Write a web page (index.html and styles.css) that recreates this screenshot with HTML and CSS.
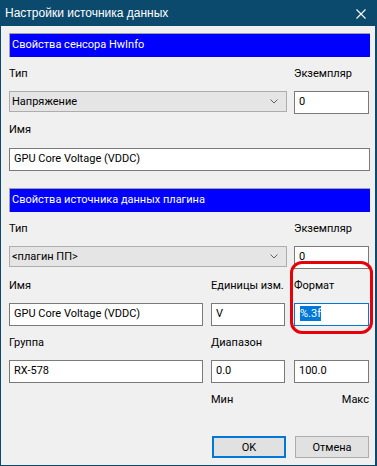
FILE: index.html
```html
<!DOCTYPE html>
<html lang="ru">
<head>
    <meta charset="UTF-8">
    <title>Настройки источника данных</title>
    <link rel="stylesheet" href="styles.css">
</head>
<body>
    <div class="window">
        <div class="titlebar">
            <span class="title">Настройки источника данных</span>
            <svg class="close" width="10" height="10" viewBox="0 0 10 10">
                <path d="M0.5 0.5 L9.5 9.5 M9.5 0.5 L0.5 9.5" stroke="#fff" stroke-width="1.1" fill="none"/>
            </svg>
        </div>

        <div class="dialog">
            <div class="section-head">Свойства сенсора HwInfo</div>
            <div class="pair">
                <div class="col-wide">
                    <div class="label">Тип</div>
                    <div class="combo">Напряжение
                        <svg class="chevron" width="8" height="5" viewBox="0 0 8 5"><path d="M0.5 0.5 L4 4 L7.5 0.5" stroke="#606060" fill="none"/></svg>
                    </div>
                </div>
                <div class="col-side">
                    <div class="label">Экземпляр</div>
                    <div class="edit">0</div>
                </div>
            </div>
            <div class="label gap-label">Имя</div>
            <div class="edit gap-edit">GPU Core Voltage (VDDC)</div>

            <div class="section-head second">Свойства источника данных плагина</div>
            <div class="pair">
                <div class="col-wide">
                    <div class="label">Тип</div>
                    <div class="combo">&lt;плагин ПП&gt;
                        <svg class="chevron" width="8" height="5" viewBox="0 0 8 5"><path d="M0.5 0.5 L4 4 L7.5 0.5" stroke="#606060" fill="none"/></svg>
                    </div>
                </div>
                <div class="col-side">
                    <div class="label">Экземпляр</div>
                    <div class="edit">0</div>
                </div>
            </div>

            <div class="triple">
                <div class="c1">
                    <div class="label">Имя</div>
                    <div class="edit">GPU Core Voltage (VDDC)</div>
                </div>
                <div class="c2">
                    <div class="label">Единицы изм.</div>
                    <div class="edit">V</div>
                </div>
                <div class="c3 marked">
                    <div class="label">Формат</div>
                    <div class="edit focused"><span class="selected">%.3f</span></div>
                    <div class="ring"></div>
                </div>
            </div>

            <div class="triple">
                <div class="c1">
                    <div class="label">Группа</div>
                    <div class="edit">RX-578</div>
                </div>
                <div class="c2">
                    <div class="label">Диапазон</div>
                    <div class="edit">0.0</div>
                </div>
                <div class="c3">
                    <div class="label">&nbsp;</div>
                    <div class="edit">100.0</div>
                </div>
            </div>

            <div class="triple">
                <div class="c1"></div>
                <div class="c2"><div class="label">Мин</div></div>
                <div class="c3"><div class="label right">Макс</div></div>
            </div>

            <div class="buttons">
                <button class="btn default">OK</button>
                <button class="btn">Отмена</button>
            </div>
        </div>
    </div>
</body>
</html>
```

FILE: styles.css
```css
body {
    margin: 0;
    font-family: Roboto, "Liberation Sans", sans-serif;
    font-size: 11px;
    color: #000;
}

.window {
    width: 377px;
    height: 466px;
    box-sizing: border-box;
    background-color: #0b4a6d;
    padding: 0 2px 1px 1px;
    display: flex;
    flex-direction: column;
}

.titlebar {
    height: 26px;
    display: flex;
    justify-content: space-between;
    align-items: center;
    padding: 0 9px 0 4px;
    color: #fff;
}

.titlebar .title {
    font-family: "Liberation Sans", sans-serif;
    font-size: 12px;
    line-height: 26px;
}

.titlebar .close {
    display: block;
    margin-top: 1px;
}

.dialog {
    flex: 1;
    background-color: #f0f0f0;
    padding: 7px 5px 0 8px;
}

.section-head {
    height: 24px;
    box-sizing: border-box;
    border-top: 1px solid #a0a0a0;
    border-left: 1px solid #a0a0a0;
    background-color: #0000ff;
    color: #fff;
    padding-left: 2px;
    line-height: 22px;
}

.section-head.second {
    margin-top: 17px;
}

.label {
    height: 16px;
    line-height: 16px;
    margin-top: 9px;
    white-space: nowrap;
}

.label.right {
    text-align: right;
}

.edit {
    height: 23px;
    box-sizing: border-box;
    border: 1px solid #7a7a7a;
    background-color: #fff;
    padding-left: 4px;
    line-height: 19px;
    margin-top: 9px;
    white-space: nowrap;
}

.edit.focused {
    border-color: #0078d7;
}

.edit .selected {
    background-color: #0078d7;
    color: #fff;
    padding: 1px 0;
    margin-left: 1px;
}

.gap-label {
    margin-top: 8px;
}

.gap-edit {
    margin-top: 10px;
}

.pair {
    display: flex;
}

.col-wide {
    width: 278px;
}

.col-side {
    width: 75px;
    margin-left: 7px;
}

.combo {
    position: relative;
    height: 21px;
    box-sizing: border-box;
    border: 1px solid #adadad;
    background-color: #e5e5e5;
    padding-left: 2px;
    line-height: 19px;
    margin-top: 9px;
}

.chevron {
    position: absolute;
    right: 8px;
    top: 7px;
}

.triple {
    display: flex;
}

.c1 {
    width: 194px;
}

.c2 {
    width: 74px;
    margin-left: 8px;
}

.c3 {
    width: 75px;
    margin-left: 9px;
}

.marked {
    position: relative;
}

.ring {
    position: absolute;
    left: -4px;
    right: -4px;
    top: -8px;
    bottom: -8px;
    border: 3px solid #e6000a;
    border-radius: 12px;
}

.buttons {
    display: flex;
    justify-content: flex-end;
    gap: 9px;
    margin-top: 28px;
    padding-right: 1px;
}

.btn {
    width: 74px;
    height: 22px;
    box-sizing: border-box;
    border: 1px solid #adadad;
    background-color: #e1e1e1;
    font-family: Roboto, "Liberation Sans", sans-serif;
    font-size: 11px;
    color: #000;
    padding: 0;
}

.btn.default {
    border: 2px solid #0078d7;
}
```
